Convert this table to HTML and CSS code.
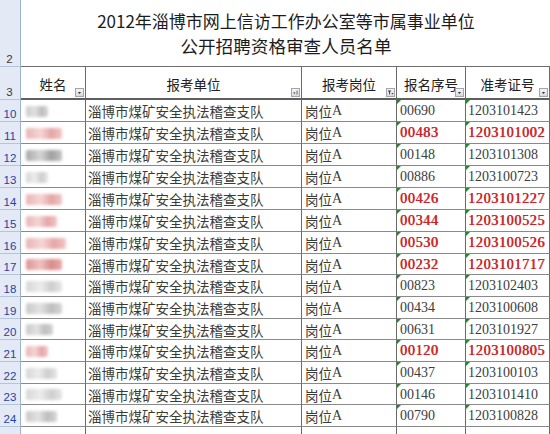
FILE: index.html
```html
<!DOCTYPE html>
<html lang="zh-CN">
<head>
<meta charset="utf-8">
<title>公开招聘资格审查人员名单</title>
<link rel="stylesheet" href="styles.css">
</head>
<body>
<div class="sheet">
  <div class="row title-row">
    <div class="rh rh-dark"><span>2</span></div>
    <div class="title">
      <div>2012年淄博市网上信访工作办公室等市属事业单位</div>
      <div class="title2">公开招聘资格审查人员名单</div>
    </div>
  </div>

  <div class="row head-row">
    <div class="rh rh-dark"><span>3</span></div>
    <div class="hc">姓名<i class="fb"><svg viewBox="0 0 9 9"><path d="M2.5 4h4L4.5 6.5z" fill="#333"/></svg></i></div>
    <div class="hc">报考单位<i class="fb"><svg viewBox="0 0 9 9"><path d="M1.5 4.5h3L3 6.5z" fill="#333"/><path d="M6.5 2v5" stroke="#333" stroke-width="0.9"/></svg></i></div>
    <div class="hc">报考岗位<i class="fb"><svg viewBox="0 0 9 9"><path d="M1 2h4.5L3.8 4.3v2.5L2.7 7.2V4.3z" fill="#333"/><path d="M5.6 5h2.6L6.9 7z" fill="#333"/></svg></i></div>
    <div class="hc">报名序号<i class="fb"><svg viewBox="0 0 9 9"><path d="M2.5 4h4L4.5 6.5z" fill="#333"/></svg></i></div>
    <div class="hc">准考证号<i class="fb"><svg viewBox="0 0 9 9"><path d="M2.5 4h4L4.5 6.5z" fill="#333"/></svg></i></div>
  </div>

  <div class="row"><div class="rh"><span>10</span></div><div class="c name"><b class="blob g w1"></b></div><div class="c unit">淄博市煤矿安全执法稽查支队</div><div class="c post">岗位<em>A</em></div><div class="c num tri">00690</div><div class="c num tri">1203101423</div></div>
  <div class="row hl"><div class="rh"><span>11</span></div><div class="c name"><b class="blob p w4"></b></div><div class="c unit">淄博市煤矿安全执法稽查支队</div><div class="c post">岗位<em>A</em></div><div class="c num tri">00483</div><div class="c num tri">1203101002</div></div>
  <div class="row"><div class="rh"><span>12</span></div><div class="c name"><b class="blob g w4 sh"></b></div><div class="c unit">淄博市煤矿安全执法稽查支队</div><div class="c post">岗位<em>A</em></div><div class="c num tri">00148</div><div class="c num tri">1203101308</div></div>
  <div class="row"><div class="rh"><span>13</span></div><div class="c name"><b class="blob g w1 light"></b></div><div class="c unit">淄博市煤矿安全执法稽查支队</div><div class="c post">岗位<em>A</em></div><div class="c num tri">00886</div><div class="c num tri">1203100723</div></div>
  <div class="row hl"><div class="rh"><span>14</span></div><div class="c name"><b class="blob p w4"></b></div><div class="c unit">淄博市煤矿安全执法稽查支队</div><div class="c post">岗位<em>A</em></div><div class="c num tri">00426</div><div class="c num tri">1203101227</div></div>
  <div class="row hl"><div class="rh"><span>15</span></div><div class="c name"><b class="blob p w3"></b></div><div class="c unit">淄博市煤矿安全执法稽查支队</div><div class="c post">岗位<em>A</em></div><div class="c num tri">00344</div><div class="c num tri">1203100525</div></div>
  <div class="row hl"><div class="rh"><span>16</span></div><div class="c name"><b class="blob p w5"></b></div><div class="c unit">淄博市煤矿安全执法稽查支队</div><div class="c post">岗位<em>A</em></div><div class="c num tri">00530</div><div class="c num tri">1203100526</div></div>
  <div class="row hl r21"><div class="rh"><span>17</span></div><div class="c name"><b class="blob p w4 dk"></b></div><div class="c unit">淄博市煤矿安全执法稽查支队</div><div class="c post">岗位<em>A</em></div><div class="c num tri">00232</div><div class="c num tri">1203101717</div></div>
  <div class="row"><div class="rh"><span>18</span></div><div class="c name"><b class="blob g w4 light"></b></div><div class="c unit">淄博市煤矿安全执法稽查支队</div><div class="c post">岗位<em>A</em></div><div class="c num tri">00823</div><div class="c num tri">1203102403</div></div>
  <div class="row"><div class="rh"><span>19</span></div><div class="c name"><b class="blob g w4"></b></div><div class="c unit">淄博市煤矿安全执法稽查支队</div><div class="c post">岗位<em>A</em></div><div class="c num tri">00434</div><div class="c num tri">1203100608</div></div>
  <div class="row r21"><div class="rh"><span>20</span></div><div class="c name"><b class="blob g w2"></b></div><div class="c unit">淄博市煤矿安全执法稽查支队</div><div class="c post">岗位<em>A</em></div><div class="c num tri">00631</div><div class="c num tri">1203101927</div></div>
  <div class="row hl"><div class="rh"><span>21</span></div><div class="c name"><b class="blob p w1"></b></div><div class="c unit">淄博市煤矿安全执法稽查支队</div><div class="c post">岗位<em>A</em></div><div class="c num tri">00120</div><div class="c num tri">1203100805</div></div>
  <div class="row"><div class="rh"><span>22</span></div><div class="c name"><b class="blob g w3 light"></b></div><div class="c unit">淄博市煤矿安全执法稽查支队</div><div class="c post">岗位<em>A</em></div><div class="c num tri">00437</div><div class="c num tri">1203100103</div></div>
  <div class="row r21"><div class="rh"><span>23</span></div><div class="c name"><b class="blob g w4 light"></b></div><div class="c unit">淄博市煤矿安全执法稽查支队</div><div class="c post">岗位<em>A</em></div><div class="c num tri">00146</div><div class="c num tri">1203101410</div></div>
  <div class="row"><div class="rh"><span>24</span></div><div class="c name"><b class="blob g w3"></b></div><div class="c unit">淄博市煤矿安全执法稽查支队</div><div class="c post">岗位<em>A</em></div><div class="c num tri">00790</div><div class="c num tri">1203100828</div></div>
  <div class="row empty"><div class="rh"><span></span></div><div class="c"></div><div class="c"></div><div class="c"></div><div class="c"></div><div class="c"></div></div>
</div>
</body>
</html>
```

FILE: styles.css
```css
html, body {
  margin: 0;
  padding: 0;
  background: #ffffff;
}
body {
  width: 550px;
  height: 434px;
  overflow: hidden;
  font-family: "Noto Sans CJK SC", "Noto Sans", sans-serif;
}
.sheet {
  display: flex;
  flex-direction: column;
}
.row {
  display: grid;
  grid-template-columns: 21px 65px 216px 95px 69px 84px;
  height: 22px;
}
.row.r21 { height: 21px; }
.row > div { box-sizing: border-box; }

.rh {
  background: #e3eaf5;
  border-right: 1px solid #9fb3cc;
  border-bottom: 1px solid #b4c4d9;
  display: flex;
  align-items: flex-end;
  justify-content: center;
  padding-bottom: 1px;
  font-family: "Liberation Sans", Arial, sans-serif;
  font-size: 11.5px;
  line-height: 12px;
  color: #2443a6;
}
.rh-dark { color: #333a44; padding-right: 1px; }

.title-row {
  grid-template-columns: 21px 529px;
  height: 67px;
}
.title {
  border-bottom: 1px solid #6e6e6e;
  padding-top: 8px;
  display: flex;
  flex-direction: column;
  align-items: center;
  font-size: 17px;
  line-height: 25px;
  color: #1c1c1c;
  padding-left: 1px;
}
.title2 { font-size: 17.6px; }

.head-row { height: 33px; }
.hc {
  position: relative;
  border-right: 1px solid #6a6a6a;
  border-bottom: 2px solid #5f5f5f;
  display: flex;
  align-items: center;
  justify-content: center;
  font-size: 13.5px;
  color: #202020;
  padding-top: 2px;
}
.fb {
  position: absolute;
  right: 1px;
  bottom: 1px;
  width: 9px;
  height: 9px;
  box-sizing: border-box;
  border: 1px solid #a2a6ac;
  background: linear-gradient(#f4f4f4, #d8dadd);
  display: block;
}
.fb svg { display: block; width: 7px; height: 7px; }

.c {
  border-right: 1px solid #6a6a6a;
  border-bottom: 1px solid #8a8a8a;
  display: flex;
  align-items: center;
  white-space: nowrap;
  overflow: hidden;
  position: relative;
  color: #3a3a3a;
}
.name { padding-left: 5px; }
.unit {
  font-size: 13.5px;
  padding-left: 2px;
  padding-top: 1px;
  color: #3b3b36;
}
.post {
  font-size: 13.5px;
  padding-left: 3px;
  padding-top: 1px;
  color: #3b3b36;
}
.post em {
  font-style: normal;
  font-family: "Liberation Serif", "Times New Roman", serif;
  font-size: 14px;
}
.num {
  font-family: "Liberation Serif", "Times New Roman", serif;
  font-size: 14px;
  padding-left: 3px;
  padding-top: 1px;
  color: #3d3d3d;
}
.num + .num { padding-left: 2px; }
.hl .num {
  color: #cc2222;
  letter-spacing: 0.7px;
  text-shadow: 0.6px 0 0 #cc2222;
}
.tri::before {
  content: "";
  position: absolute;
  left: 0;
  top: 0;
  border-top: 4px solid #1f8a2a;
  border-right: 4px solid transparent;
}
.empty .c { border-bottom: none; }

.blob {
  display: block;
  height: 11px;
  margin-top: 1px;
  border-radius: 2px;
  filter: blur(1.6px);
}
.blob.g { background: linear-gradient(90deg, #c9c9c9, #e2e2e2 40%, #bdbdbd 70%, #d6d6d6); }
.blob.g.light { background: linear-gradient(90deg, #d6d6d6, #ececec 40%, #cdcdcd 70%, #e6e6e6); }
.blob.g.sh { background: linear-gradient(90deg, #a9a9a9, #d5d5d5 40%, #9f9f9f 70%, #c4c4c4); }
.blob.p { background: linear-gradient(90deg, #e9b4b4, #f5d6d6 40%, #e4a5a5 70%, #f0c6c6); }
.blob.p.dk { background: linear-gradient(90deg, #dc9494, #efc1c1 40%, #d98a8a 70%, #e8aaaa); }
.w1 { width: 22px; }
.w2 { width: 27px; }
.w3 { width: 31px; }
.w4 { width: 36px; }
.w5 { width: 40px; }
```
